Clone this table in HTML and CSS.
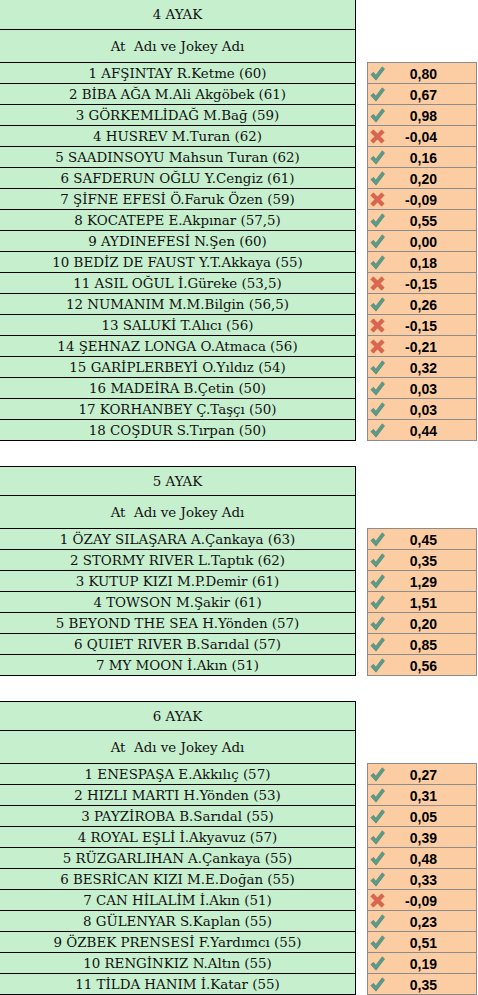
FILE: index.html
```html
<!DOCTYPE html>
<html lang="tr">
<head>
    <meta charset="UTF-8">
    <title>Ayak Tahminleri</title>
    <link rel="stylesheet" href="styles.css">
</head>
<body>
    <div id="legs"></div>

    <script>
        const legs = [
            { title: "4 AYAK", horses: [
                ["1 AFŞINTAY R.Ketme (60)", "0,80"],
                ["2 BİBA AĞA M.Ali Akgöbek (61)", "0,67"],
                ["3 GÖRKEMLİDAĞ M.Bağ (59)", "0,98"],
                ["4 HUSREV M.Turan (62)", "-0,04"],
                ["5 SAADINSOYU Mahsun Turan (62)", "0,16"],
                ["6 SAFDERUN OĞLU Y.Cengiz (61)", "0,20"],
                ["7 ŞİFNE EFESİ Ö.Faruk Özen (59)", "-0,09"],
                ["8 KOCATEPE E.Akpınar (57,5)", "0,55"],
                ["9 AYDINEFESİ N.Şen (60)", "0,00"],
                ["10 BEDİZ DE FAUST Y.T.Akkaya (55)", "0,18"],
                ["11 ASIL OĞUL İ.Güreke (53,5)", "-0,15"],
                ["12 NUMANIM M.M.Bilgin (56,5)", "0,26"],
                ["13 SALUKİ T.Alıcı (56)", "-0,15"],
                ["14 ŞEHNAZ LONGA O.Atmaca (56)", "-0,21"],
                ["15 GARİPLERBEYİ O.Yıldız (54)", "0,32"],
                ["16 MADEİRA B.Çetin (50)", "0,03"],
                ["17 KORHANBEY Ç.Taşçı (50)", "0,03"],
                ["18 COŞDUR S.Tırpan (50)", "0,44"]
            ]},
            { title: "5 AYAK", horses: [
                ["1 ÖZAY SILAŞARA A.Çankaya (63)", "0,45"],
                ["2 STORMY RIVER L.Taptık (62)", "0,35"],
                ["3 KUTUP KIZI M.P.Demir (61)", "1,29"],
                ["4 TOWSON M.Şakir (61)", "1,51"],
                ["5 BEYOND THE SEA H.Yönden (57)", "0,20"],
                ["6 QUIET RIVER B.Sarıdal (57)", "0,85"],
                ["7 MY MOON İ.Akın (51)", "0,56"]
            ]},
            { title: "6 AYAK", horses: [
                ["1 ENESPAŞA E.Akkılıç (57)", "0,27"],
                ["2 HIZLI MARTI H.Yönden (53)", "0,31"],
                ["3 PAYZİROBA B.Sarıdal (55)", "0,05"],
                ["4 ROYAL EŞLİ İ.Akyavuz (57)", "0,39"],
                ["5 RÜZGARLIHAN A.Çankaya (55)", "0,48"],
                ["6 BESRİCAN KIZI M.E.Doğan (55)", "0,33"],
                ["7 CAN HİLALİM İ.Akın (51)", "-0,09"],
                ["8 GÜLENYAR S.Kaplan (55)", "0,23"],
                ["9 ÖZBEK PRENSESİ F.Yardımcı (55)", "0,51"],
                ["10 RENGİNKIZ N.Altın (55)", "0,19"],
                ["11 TİLDA HANIM İ.Katar (55)", "0,35"]
            ]}
        ];

        // ikon seti: yeşil tik / kırmızı çarpı
        const okIcon = '<svg class="icon" viewBox="0 0 14 14"><path d="M0.8 8 L3.3 5.9 L5.4 8.6 L11.4 0.8 L13.6 2.7 L5.6 13.2 Z" fill="#5a9b8a" stroke="#4b8776" stroke-width="0.6" stroke-linejoin="round"/></svg>';
        const badIcon = '<svg class="icon" viewBox="0 0 14 14"><path d="M0.8 3.2 L3.2 0.8 L7 4.6 L10.8 0.8 L13.2 3.2 L9.4 7 L13.2 10.8 L10.8 13.2 L7 9.4 L3.2 13.2 L0.8 10.8 L4.6 7 Z" fill="#da6650" stroke="#c55640" stroke-width="0.6" stroke-linejoin="round"/></svg>';

        const container = document.getElementById('legs');
        legs.forEach(leg => {
            const section = document.createElement('div');
            section.className = 'leg';

            let names = '';
            let scores = '';
            leg.horses.forEach(([name, score]) => {
                names += `<div class="horse">${name}</div>`;
                const icon = score.startsWith('-') ? badIcon : okIcon;
                scores += `<div class="score">${icon}<span class="value">${score}</span></div>`;
            });

            section.innerHTML = `
                <div class="leg-title">${leg.title}</div>
                <div class="leg-sub">At&nbsp; Adı ve Jokey Adı</div>
                <div class="leg-body">
                    <div class="horses">${names}</div>
                    <div class="scores">${scores}</div>
                </div>`;
            container.appendChild(section);
        });
    </script>
</body>
</html>
```

FILE: styles.css
```css
body {
    margin: 0;
    background: #fff;
    color: #111;
    font-family: "DejaVu Serif", "Liberation Serif", serif;
}

.leg {
    margin-bottom: 25px;
}

.leg-title,
.leg-sub,
.horse {
    width: 355px;
    background: #c6efce;
    border-right: 1px solid #000;
    text-align: center;
    font-size: 13.4px;
}

.leg-title {
    height: 28px;
    line-height: 29px;
    border-top: 1px solid #000;
    border-bottom: 1px solid #000;
}

/* ilk tablo ekranın üstünden kesik başlıyor */
.leg:first-child .leg-title {
    border-top: 0;
    height: 29px;
}

.leg-sub {
    height: 32px;
    line-height: 34px;
}

.leg-body {
    display: flex;
    align-items: flex-start;
}

.horses {
    width: 356px;
}

.horse {
    height: 20px;
    line-height: 21px;
    border-top: 1px solid #000;
    white-space: nowrap;
}

.horse:last-child {
    border-bottom: 1px solid #000;
}

.scores {
    margin-left: 11px;
    width: 108px;
    border: 1px solid #8c8c8c;
    background: #fccda2;
}

.score {
    height: 20px;
    display: flex;
    align-items: center;
    border-top: 1px solid #8c8c8c;
}

.score:first-child {
    border-top: 0;
}

.icon {
    width: 15px;
    height: 15px;
    margin-left: 2px;
    flex-shrink: 0;
}

.value {
    flex: 1;
    text-align: right;
    padding-right: 39px;
    padding-top: 1px;
    font-family: "Liberation Sans", Arial, sans-serif;
    font-weight: bold;
    font-size: 14px;
    color: #000;
}
```
